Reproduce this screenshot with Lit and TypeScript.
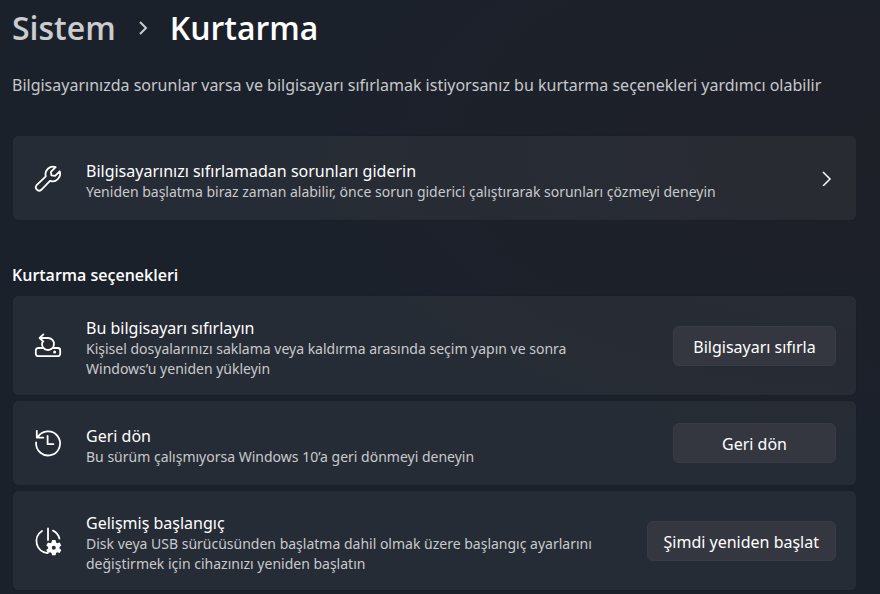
import { LitElement, html, css, svg } from "lit";
import type { TemplateResult } from "lit";
import { customElement, property } from "lit/decorators.js";

const icons: Record<string, TemplateResult> = {
  wrench: svg`<path d="M22.6 4.1 17.9 8.8 18.4 12.4 22.1 12.9 26.7 8.3A7.6 7.6 0 0 1 17 17.9L8.3 26.8A3.3 3.3 0 0 1 3.6 22.2L12.8 13.3A7.6 7.6 0 0 1 22.6 4.1Z" />`,
  reset: svg`<path d="M6.6 7H15A6 6 0 1 1 9.2 11.4M10.4 3.4 6.6 7 10.4 10.6" /><path d="M10.2 17H5.2A2.4 2.4 0 0 0 2.8 19.4V22.8A2.4 2.4 0 0 0 5.2 25.2H24.8A2.4 2.4 0 0 0 27.2 22.8V19.4A2.4 2.4 0 0 0 24.8 17H19.8" /><circle class="solid" cx="21.6" cy="21" r="1.5" />`,
  history: svg`<path d="M3.1 14.4A12 12 0 1 0 4.8 9.2M3.8 2.8V9.6H10.4M14.6 8V16.2H20.4" />`,
  power: svg`<path d="M9 5A12 12 0 0 0 14.6 27.1M20 4.6A12 12 0 0 1 26.4 12.6M15 2.4V14" /><path class="gear" fill-rule="evenodd" d="M19.1 14.1h3.4l.6 2.4 1.2.7 2.4-.7 1.6 2.9-1.8 1.6v1.4l1.8 1.6-1.6 2.9-2.4-.7-1.2.7-.6 2.4h-3.4l-.6-2.4-1.2-.7-2.4.7-1.6-2.9 1.8-1.6V21l-1.8-1.6 1.6-2.9 2.4.7 1.2-.7ZM20.8 19.7a2 2 0 1 0 0 4 2 2 0 0 0 0-4Z" />`,
};

@customElement("setting-card")
export class SettingCard extends LitElement {
  @property() icon = "";
  @property() heading = "";
  @property() description = "";
  @property() action = "";

  static styles = css`
    :host { display: block; }
    .card {
      box-sizing: border-box;
      width: 100%;
      min-height: 86px;
      display: flex;
      align-items: center;
      padding: 16px 20px;
      border: 1px solid #1a2028;
      border-radius: 6px;
      background: rgba(255, 255, 255, 0.05);
      background-clip: padding-box;
      color: #fff;
      font: inherit;
      text-align: left;
    }
    .icon {
      flex: none;
      width: 30px;
      height: 30px;
      margin-right: 23px;
      fill: none;
      stroke: currentColor;
      stroke-width: 1.8;
      stroke-linejoin: round;
      stroke-linecap: round;
    }
    .solid, .gear { fill: currentColor; stroke: none; }
    .text { flex: 1; min-width: 0; padding-top: 6px; }
    .heading { display: block; font-size: 16px; line-height: 21px; }
    .description {
      display: block;
      max-width: 540px;
      color: #c8cacd;
      font-size: 14px;
      line-height: 20px;
    }
    .link .description { max-width: none; }
    .chevron {
      flex: none;
      width: 16px;
      height: 16px;
      fill: none;
      stroke: currentColor;
      stroke-width: 1.5;
    }
    .button {
      flex: none;
      min-width: 163px;
      height: 40px;
      margin-left: 20px;
      padding: 2px 16px 0;
      border: 1px solid #393c45;
      border-radius: 6px;
      background: #343740;
      color: #fff;
      font: inherit;
      font-size: 16px;
    }
  `;

  private body() {
    return html`
      <svg class="icon" viewBox="0 0 30 30" aria-hidden="true">${icons[this.icon]}</svg>
      <span class="text">
        <span class="heading">${this.heading}</span>
        <span class="description">${this.description}</span>
      </span>`;
  }

  render() {
    return this.action
      ? html`<div class="card">${this.body()}<button class="button">${this.action}</button></div>`
      : html`<button class="card link">${this.body()}
          <svg class="chevron" viewBox="0 0 16 16" aria-hidden="true"><path d="M3 2 10 9 3 16" /></svg>
        </button>`;
  }
}

@customElement("app-root")
export class AppRoot extends LitElement {
  static styles = css`
    :host {
      display: block;
      box-sizing: border-box;
      min-height: 100vh;
      padding: 8px 23px 3px 12px;
      background: radial-gradient(ellipse at 100% 25%, #1e2028, #1b212b 50%);
      color: #fff;
      font-family: "Noto Sans", sans-serif;
    }
    .crumbs, .subtitle { font-family: "Open Sans", "Noto Sans", sans-serif; font-weight: 600; }
    .crumbs {
      display: flex;
      align-items: center;
      font-size: 32px;
      line-height: 40px;
    }
    .crumbs a { color: #cbcccf; text-decoration: none; }
    .crumbs h1 { margin: 0; font: inherit; }
    .crumbs svg {
      width: 14px;
      height: 14px;
      margin: 0 20px;
      fill: none;
      stroke: #cbcccf;
      stroke-width: 2;
    }
    .intro { margin: 25px 0 38px; color: #c6c8ca; font-size: 16px; line-height: 24px; }
    .subtitle { margin: 42px 0 8px; font-size: 16px; line-height: 24px; }
    .list { display: grid; gap: 4px; }
  `;

  render() {
    return html`
      <nav class="crumbs">
        <a href="#sistem">Sistem</a>
        <svg viewBox="0 0 14 14" aria-hidden="true"><path d="M4 1 10 7 4 13" /></svg>
        <h1>Kurtarma</h1>
      </nav>
      <p class="intro">Bilgisayarınızda sorunlar varsa ve bilgisayarı sıfırlamak istiyorsanız bu kurtarma seçenekleri yardımcı olabilir</p>
      <setting-card icon="wrench" heading="Bilgisayarınızı sıfırlamadan sorunları giderin"
        description="Yeniden başlatma biraz zaman alabilir, önce sorun giderici çalıştırarak sorunları çözmeyi deneyin"></setting-card>
      <h2 class="subtitle">Kurtarma seçenekleri</h2>
      <div class="list">
        <setting-card icon="reset" heading="Bu bilgisayarı sıfırlayın" action="Bilgisayarı sıfırla"
          description="Kişisel dosyalarınızı saklama veya kaldırma arasında seçim yapın ve sonra Windows’u yeniden yükleyin"></setting-card>
        <setting-card icon="history" heading="Geri dön" action="Geri dön"
          description="Bu sürüm çalışmıyorsa Windows 10’a geri dönmeyi deneyin"></setting-card>
        <setting-card icon="power" heading="Gelişmiş başlangıç" action="Şimdi yeniden başlat"
          description="Disk veya USB sürücüsünden başlatma dahil olmak üzere başlangıç ayarlarını değiştirmek için cihazınızı yeniden başlatın"></setting-card>
      </div>`;
  }
}
